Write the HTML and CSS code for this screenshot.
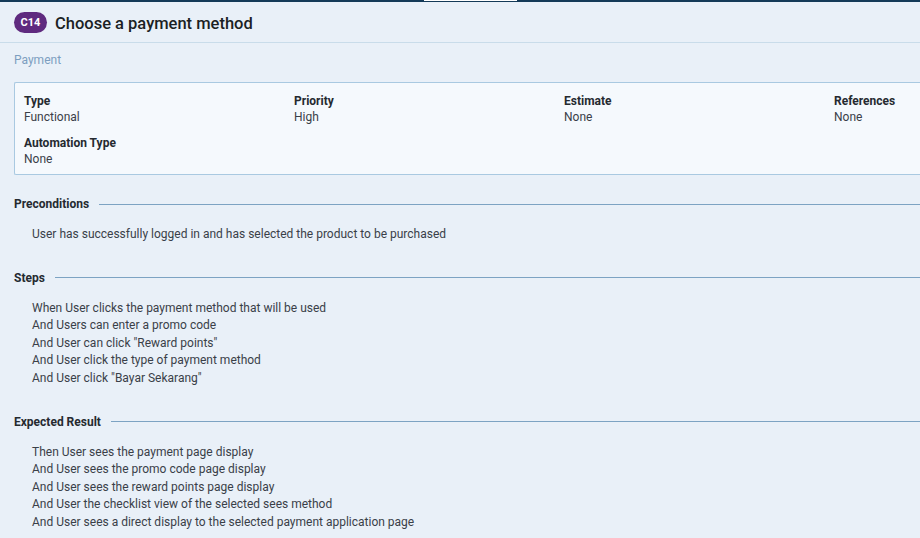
FILE: index.html
```html
<!DOCTYPE html>
<html>
<head>
<meta charset="utf-8">
<link rel="stylesheet" href="styles.css">
</head>
<body>
<div class="topbar"><span class="topbar-tab"></span></div>
<header class="head">
  <span class="badge">C14</span>
  <h1 class="title">Choose a payment method</h1>
</header>
<div class="section-name">Payment</div>
<div class="fields">
  <div class="field"><div class="label">Type</div><div class="value">Functional</div></div>
  <div class="field"><div class="label">Priority</div><div class="value">High</div></div>
  <div class="field"><div class="label">Estimate</div><div class="value">None</div></div>
  <div class="field"><div class="label">References</div><div class="value">None</div></div>
  <div class="field"><div class="label">Automation Type</div><div class="value">None</div></div>
</div>
<section class="block">
  <h2 class="block-title"><span>Preconditions</span></h2>
  <div class="block-body">
    <p>User has successfully logged in and has selected the product to be purchased</p>
  </div>
</section>
<section class="block">
  <h2 class="block-title"><span>Steps</span></h2>
  <div class="block-body">
    <p>When User clicks the payment method that will be used</p>
    <p>And Users can enter a promo code</p>
    <p>And User can click "Reward points"</p>
    <p>And User click the type of payment method</p>
    <p>And User click "Bayar Sekarang"</p>
  </div>
</section>
<section class="block">
  <h2 class="block-title"><span>Expected Result</span></h2>
  <div class="block-body">
    <p>Then User sees the payment page display</p>
    <p>And User sees the promo code page display</p>
    <p>And User sees the reward points page display</p>
    <p>And User the checklist view of the selected sees method</p>
    <p>And User sees a direct display to the selected payment application page</p>
  </div>
</section>
</body>
</html>
```

FILE: styles.css
```css
* { box-sizing: border-box; }
html, body { margin: 0; padding: 0; }
body {
  background: #e9f0f8;
  font-family: Roboto, "Noto Sans", sans-serif;
  color: #333c45;
  width: 920px;
  height: 538px;
  overflow: hidden;
}
.topbar {
  height: 2px;
  background: #143a58;
  display: flex;
}
.topbar-tab {
  margin-left: 424px;
  width: 93px;
  height: 1px;
  background: #ffffff;
}
.head {
  display: flex;
  align-items: center;
  gap: 8px;
  height: 41px;
  padding: 1px 14px 0;
  border-bottom: 1px solid #c9dcea;
}
.badge {
  display: inline-flex;
  align-items: center;
  justify-content: center;
  width: 33px;
  height: 21px;
  border-radius: 11px;
  background: #5f2a7f;
  color: #fff;
  font-size: 11px;
  font-weight: 700;
}
.title {
  margin: 0;
  padding-top: 2px;
  font-size: 16.5px;
  font-weight: 500;
  color: #1b1f24;
}
.section-name {
  padding: 10px 14px 0;
  height: 39px;
  font-size: 12px;
  color: #7c9ec0;
}
.fields {
  margin-left: 14px;
  width: calc(100% - 14px);
  height: 93px;
  border: 1px solid #a9c9e1;
  border-right: none;
  border-radius: 2px 0 0 2px;
  background: #f5f9fd;
  padding: 10px 9px;
  display: grid;
  grid-template-columns: 270px 270px 270px 1fr;
  row-gap: 9px;
  align-content: start;
}
.label {
  font-size: 12px;
  font-weight: 700;
  color: #252a30;
  line-height: 16px;
}
.value {
  font-size: 12px;
  color: #3a4048;
  line-height: 17px;
}
.block { padding: 0 0 0 14px; }
.block-title {
  margin: 0;
  display: flex;
  align-items: center;
  gap: 10px;
  font-size: 12px;
  font-weight: 700;
  color: #252a30;
  line-height: 16px;
}
.block-title::after {
  content: "";
  flex: 1;
  height: 1px;
  background: #7da3c3;
}
.block-body {
  padding: 14px 0 0 18px;
}
.block-body p {
  margin: 0;
  font-size: 12px;
  line-height: 17.6px;
  color: #3a4048;
}
.block:nth-of-type(1) { margin-top: 21px; }
.block:nth-of-type(1) .block-body { padding-bottom: 26px; }
.block:nth-of-type(2) .block-body { padding-bottom: 26px; }
```
